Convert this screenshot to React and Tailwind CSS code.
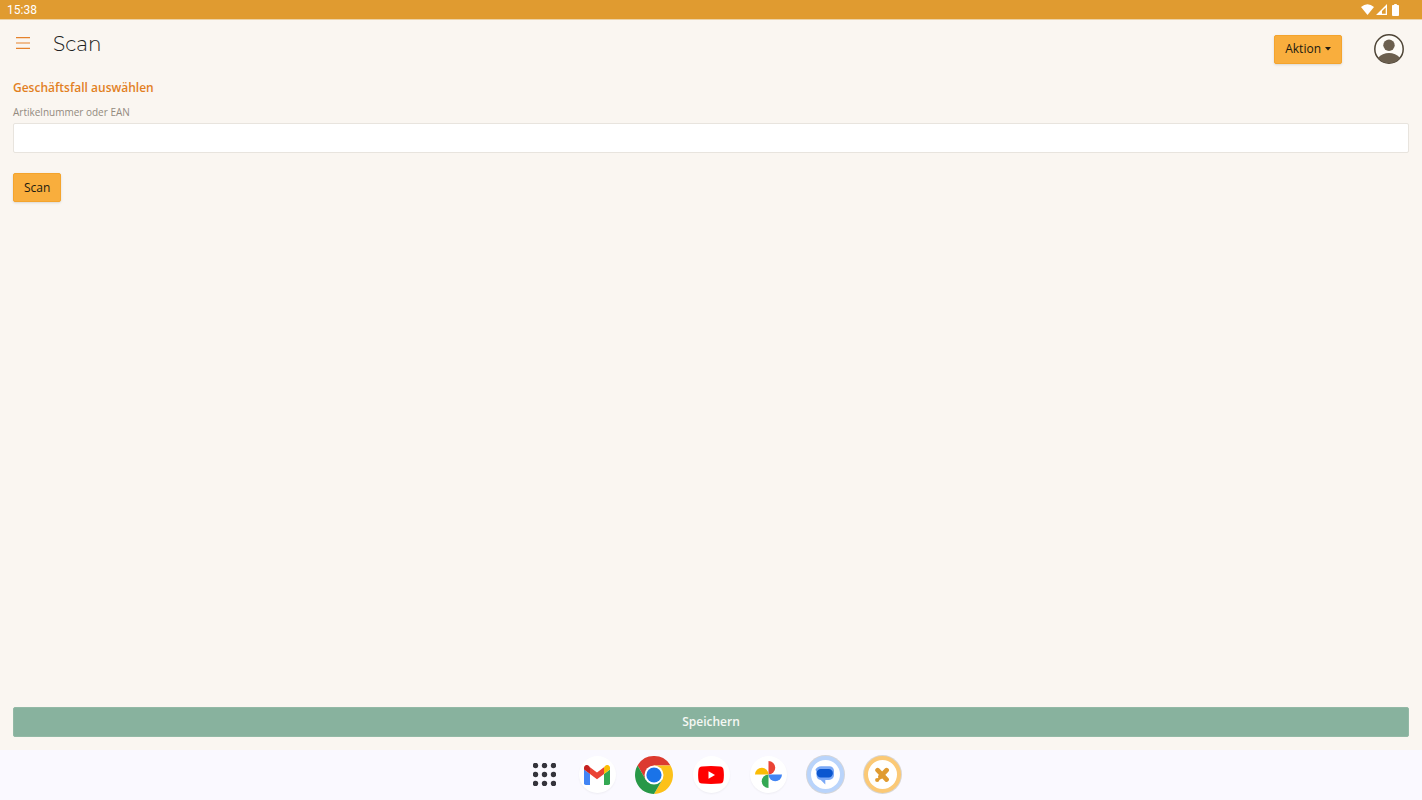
import React, { useState } from 'react';

const StatusBar = () => (
  <div className="flex h-5 items-center justify-between border-b border-[#ecd2a6] bg-[#e09b30] pl-[7px] pr-[22px] text-white">
    <span className="font-[Roboto,sans-serif] text-xs">15:38</span>
    <div className="flex items-center gap-[2px]">
      <svg width="13" height="11" viewBox="0 0 13 11" fill="currentColor" aria-hidden="true">
        <path d="M6.500 11 0 3Q6.500-2.400 13 3Z" />
      </svg>
      <svg width="11" height="11" viewBox="0 0 11 11" fill="currentColor" fillRule="evenodd" aria-hidden="true">
        <path d="M11 0V11H0ZM9.700 3.500 6 7.100V9.700H9.700Z" />
      </svg>
      <svg className="ml-[3px]" width="8" height="12" viewBox="0 0 8 12" fill="currentColor" aria-hidden="true">
        <path d="M2.200 0h2.600v1.100H6.200a.8.8 0 0 1 .8.8v9.200a.9.9 0 0 1-.9.9H.9a.9.9 0 0 1-.9-.9V1.900a.8.8 0 0 1 .8-.8h1.400Z" />
      </svg>
    </div>
  </div>
);

const Header = () => (
  <header className="flex h-[58px] items-center justify-between pl-4 pr-[18px]">
    <div className="mb-[10px] flex items-center gap-[23px]">
      <button type="button" aria-label="Menü" className="pb-[2px] text-[#e5822c]">
        <svg width="14" height="12" viewBox="0 0 14 12" stroke="currentColor" strokeWidth="1.1" aria-hidden="true">
          <path d="M0 .6h14M0 6h14M0 11.400h14" />
        </svg>
      </button>
      <h1 className="font-[Montserrat,Inter,sans-serif] text-xl font-light text-[#222]">Scan</h1>
    </div>
    <div className="flex items-center gap-8">
      <button
        type="button"
        className="flex h-[29px] items-center gap-1 rounded-[2px] border border-[#f4a42d] bg-[#f9ae3d] px-[10px] text-xs font-medium text-[#211a10] shadow-sm"
      >
        Aktion
        <svg width="6" height="4" viewBox="0 0 6 4" fill="currentColor" aria-hidden="true">
          <path d="M0 0h6L3 3.500Z" />
        </svg>
      </button>
      <button type="button" aria-label="Profil">
        <svg width="30" height="30" viewBox="0 0 30 30" aria-hidden="true">
          <circle cx="15" cy="15" r="14.200" fill="#fdfbf7" stroke="#4d4436" strokeWidth="1.500" />
          <circle cx="15" cy="11.300" r="5.700" fill="#6b5f4e" />
          <path d="M4 24C6.500 20.500 11 18.900 15 18.900S23.500 20.500 26 24A14 14 0 0 1 15 29.200 14 14 0 0 1 4 24Z" fill="#6b5f4e" />
        </svg>
      </button>
    </div>
  </header>
);

const ScanForm = () => {
  const [article, setArticle] = useState('');

  return (
    <form
      className="flex flex-1 flex-col px-[13px] pb-[13px]"
      onSubmit={(e) => e.preventDefault()}
    >
      <h2 className="mt-px text-xs leading-[18px] font-semibold text-[#e2801f]">Geschäftsfall auswählen</h2>
      <label htmlFor="article" className="mt-[7px] text-[10px] leading-4 text-[#938a7f]">
        Artikelnummer oder EAN
      </label>
      <input
        id="article"
        type="text"
        value={article}
        onChange={(e) => setArticle(e.target.value)}
        className="mt-[3px] h-[30px] w-full rounded-[2px] border border-[#e8e4de] bg-white px-2 text-xs"
      />
      <button
        type="button"
        className="mt-5 h-[29px] self-start rounded-[2px] border border-[#f4a42d] bg-[#f9ae3d] px-[10px] text-xs font-medium text-[#211a10] shadow-sm"
      >
        Scan
      </button>
      <button
        type="submit"
        className="mt-auto h-[30px] w-full rounded-[2px] border border-[#93b9a6] bg-[#88b29e] text-xs font-semibold text-[#f5f8f4]"
      >
        Speichern
      </button>
    </form>
  );
};

const GmailIcon = () => (
  <svg width="26" height="20" viewBox="0 0 26 20" aria-hidden="true">
    <path d="M0 4.500 6 9v11H1.800A1.800 1.800 0 0 1 0 18.200Z" fill="#4285f4" />
    <path d="M20 9l6-4.500v13.700a1.800 1.800 0 0 1-1.800 1.800H20Z" fill="#34a853" />
    <path d="M20 2.200V9l6-4.500V2.800C26 .3 23.200-.9 21.300.7Z" fill="#fbbc04" />
    <path d="M6 9V2.200l7 5.300 7-5.300V9l-7 5.300Z" fill="#ea4335" />
    <path d="M0 2.800v1.700L6 9V2.200L4.700.7C2.800-.9 0 .3 0 2.800Z" fill="#c5221f" />
  </svg>
);

const ChromeIcon = () => (
  <svg width="38" height="38" viewBox="0 0 48 48" aria-hidden="true">
    <path d="M24 12h20.800A24 24 0 0 0 3.220 12L13.610 30Z" fill="#dc3a30" />
    <path d="M34.390 30 24 48A24 24 0 0 0 44.780 12H24Z" fill="#fcc11a" />
    <path d="M13.610 30 3.220 12A24 24 0 0 0 24 48l10.390-18Z" fill="#279847" />
    <circle cx="24" cy="24" r="12" fill="#fff" />
    <circle cx="24" cy="24" r="9.600" fill="#1a73e8" />
  </svg>
);

const YoutubeIcon = () => (
  <svg width="26" height="18" viewBox="0 0 26 18" aria-hidden="true">
    <path d="M4 .4Q13-.4 22 .4 25.200.7 25.500 3.800 26.300 9 25.500 14.200 25.200 17.300 22 17.600 13 18.400 4 17.600.8 17.300.5 14.200-.3 9 .5 3.800.8.7 4 .4Z" fill="#f00" />
    <path d="M10.500 5.200v7.600L17 9Z" fill="#fff" />
  </svg>
);

const PhotosIcon = () => (
  <svg width="27" height="27" viewBox="0 0 28 28" aria-hidden="true">
    <path d="M14 0a7 7 0 0 1 0 14Z" fill="#ea4335" />
    <path d="M28 14a7 7 0 0 1-14 0Z" fill="#4285f4" />
    <path d="M14 28a7 7 0 0 1 0-14Z" fill="#34a853" />
    <path d="M0 14a7 7 0 0 1 14 0Z" fill="#fbbc04" />
  </svg>
);

const MessagesIcon = () => (
  <svg width="20" height="20" viewBox="0 0 20 20" aria-hidden="true">
    <path d="M6 1.200h8.500A4.500 4.500 0 0 1 19 5.700V10a5 5 0 0 1-5 5h-3.700v4.500L5.800 15A5 5 0 0 1 1.500 10V6.800L.4 4.700Q2.200 1.200 6 1.200Z" fill="#7ba9f6" />
    <path d="M5.800 4h7.900a4.200 4.200 0 0 1 0 8.400H5.800a4.200 4.200 0 0 1 0-8.400Z" fill="#0b57d0" />
  </svg>
);

const CrossIcon = () => (
  <svg width="16" height="16" viewBox="0 0 16 16" aria-hidden="true">
    <path d="M3.600 3.200 12.600 12.600M12.600 3.200 6.500 9.700" fill="none" stroke="#e09b30" strokeWidth="4.700" strokeLinecap="round" />
    <circle cx="3.200" cy="13" r="2.100" fill="#e09b30" />
    <path d="M3.800 11.200 6 9.500 7.500 11 5.200 13.200Z" fill="#e09b30" />
  </svg>
);

const apps = [
  { name: 'Gmail', icon: <GmailIcon />, ring: 'bg-white shadow-xs' },
  { name: 'Chrome', icon: <ChromeIcon />, ring: '' },
  { name: 'YouTube', icon: <YoutubeIcon />, ring: 'bg-white shadow-xs' },
  { name: 'Fotos', icon: <PhotosIcon />, ring: 'bg-white shadow-xs' },
  { name: 'Messages', icon: <MessagesIcon />, ring: 'border-4 border-[#b9d4fb] bg-white ring-1 ring-[#d3d5da]' },
  { name: 'Lager', icon: <CrossIcon />, ring: 'border-4 border-[#fbc976] bg-white ring-1 ring-[#d9d6d2]' },
];

const dots = [2.5, 11.5, 20.5];

const Dock = () => (
  <nav className="flex h-[50px] items-center justify-center gap-[17px] bg-[#faf9ff] pb-px pl-2">
    <button type="button" aria-label="Alle Apps" className="flex w-8 justify-center">
      <svg width="23" height="23" viewBox="0 0 23 23" fill="#34343b" aria-hidden="true">
        {dots.map((y) => dots.map((x) => <circle key={`${x}-${y}`} cx={x} cy={y} r="2.7" />))}
      </svg>
    </button>
    {apps.map((app) => (
      <button key={app.name} type="button" aria-label={app.name} className="flex w-10 justify-center">
        <span className={`flex size-[37px] items-center justify-center rounded-full ${app.ring}`}>
          <span className="shrink-0">{app.icon}</span>
        </span>
      </button>
    ))}
  </nav>
);

const App = () => (
  <div className="flex min-h-screen flex-col bg-[#faf6f1] font-['Open_Sans',sans-serif]">
    <StatusBar />
    <Header />
    <ScanForm />
    <Dock />
  </div>
);

export default App;
